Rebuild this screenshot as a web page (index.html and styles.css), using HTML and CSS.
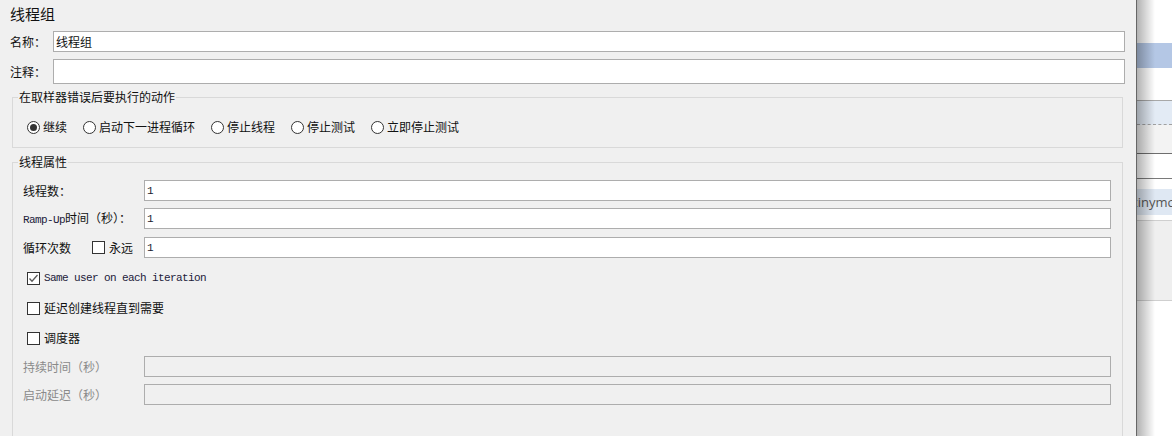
FILE: index.html
```html
<!DOCTYPE html>
<html lang="zh-CN">
<head>
<meta charset="utf-8">
<title>线程组</title>
<link rel="stylesheet" href="styles.css">
</head>
<body>
<div class="app">
  <main class="panel">
    <h1 class="title">线程组</h1>

    <div class="field name-row">
      <label class="field-label" for="name">名称：</label>
      <input id="name" class="text-input" type="text" value="线程组">
    </div>
    <div class="field comment-row">
      <label class="field-label" for="comment">注释：</label>
      <input id="comment" class="text-input tall" type="text" value="">
    </div>

    <fieldset class="group group-error">
      <legend class="group-title">在取样器错误后要执行的动作</legend>
      <div class="radio-row">
        <label class="radio"><span class="radio-mark checked"></span>继续</label>
        <label class="radio"><span class="radio-mark"></span>启动下一进程循环</label>
        <label class="radio"><span class="radio-mark"></span>停止线程</label>
        <label class="radio"><span class="radio-mark"></span>停止测试</label>
        <label class="radio"><span class="radio-mark"></span>立即停止测试</label>
      </div>
    </fieldset>

    <fieldset class="group group-props">
      <legend class="group-title">线程属性</legend>
      <div class="props">
        <div class="prop-row">
          <span class="prop-label">线程数：</span>
          <input class="num-input" type="text" value="1">
        </div>
        <div class="prop-row">
          <span class="prop-label"><span class="mono">Ramp-Up</span>时间（秒）：</span>
          <input class="num-input" type="text" value="1">
        </div>
        <div class="prop-row loop-row">
          <span class="prop-label loop-label">循环次数
            <span class="check inline-check"><span class="check-box"></span>永远</span>
          </span>
          <input class="num-input" type="text" value="1">
        </div>

        <div class="check-row first-check">
          <span class="check"><span class="check-box checked"><svg viewBox="0 0 13 13" width="13" height="13"><path d="M2.5 6.5 L5 9.2 L10.5 3" fill="none" stroke="#5a5a5a" stroke-width="1.3"/></svg></span><span class="mono">Same user on each iteration</span></span>
        </div>
        <div class="check-row">
          <span class="check"><span class="check-box"></span>延迟创建线程直到需要</span>
        </div>
        <div class="check-row">
          <span class="check"><span class="check-box"></span>调度器</span>
        </div>

        <div class="prop-row disabled-row">
          <span class="prop-label muted">持续时间（秒）</span>
          <input class="num-input" type="text" value="" disabled>
        </div>
        <div class="prop-row">
          <span class="prop-label muted">启动延迟（秒）</span>
          <input class="num-input" type="text" value="" disabled>
        </div>
      </div>
    </fieldset>
  </main>

  <aside class="side">
    <div class="side-top"></div>
    <div class="side-selected"></div>
    <div class="side-gap"></div>
    <div class="side-tab"></div>
    <div class="side-toolbar"></div>
    <div class="side-field"></div>
    <div class="side-spacer"></div>
    <div class="side-item"><span class="side-text">tinymce</span></div>
    <div class="side-spacer small"></div>
    <div class="side-gray"></div>
    <div class="side-rest"></div>
  </aside>
</div>
</body>
</html>
```

FILE: styles.css
```css
* {
  box-sizing: border-box;
}

html, body {
  margin: 0;
  padding: 0;
  height: 100%;
  overflow: hidden;
}

body {
  background: #f0f0f0;
  font-family: "Noto Sans CJK SC", "Microsoft YaHei", sans-serif;
  font-size: 12px;
  color: #111;
}

.app {
  display: flex;
  height: 436px;
}

/* ---------- main panel ---------- */
.panel {
  width: 1137px;
  flex: none;
  height: 436px;
  overflow: hidden;
  background: #f0f0f0;
  border-right: 1px solid #666;
  padding: 0 11px 0 10px;
}

.title {
  margin: 0;
  padding-top: 3px;
  font-size: 15px;
  font-weight: normal;
  line-height: 22px;
  color: #111;
}

.field {
  display: flex;
  align-items: center;
}

.name-row {
  margin-top: 6px;
}

.comment-row {
  margin-top: 7px;
}

.field-label {
  width: 43px;
  flex: none;
  line-height: 16px;
}

.text-input,
.num-input {
  flex: 1;
  min-width: 0;
  height: 21px;
  margin: 0;
  padding: 0 2px;
  border: 1px solid #adadad;
  border-radius: 0;
  background: #fff;
  outline: none;
  font-family: "Noto Sans CJK SC", "Microsoft YaHei", sans-serif;
  font-size: 12px;
  color: #111;
}

.text-input.tall {
  height: 25px;
}

.num-input {
  font-family: "Liberation Mono", monospace;
  font-size: 11px;
  color: #1a1a30;
}

.num-input:disabled {
  background: #f0f0f0;
}

/* ---------- groups ---------- */
.group {
  margin: 0 2px;
  padding: 0;
  border: 1px solid #d9d9d9;
  min-width: 0;
}

.group-error {
  margin-top: 6px;
}

.group-props {
  margin-top: 7px;
  padding-bottom: 40px;
}

.group-title {
  margin-left: 5px;
  padding: 0 1px;
  font-size: 12px;
  line-height: 14px;
  color: #111;
}

.radio-row {
  display: flex;
  align-items: center;
  gap: 16px;
  height: 20px;
  box-sizing: content-box;
  padding: 13px 0 10px 14px;
}

.radio {
  display: inline-flex;
  align-items: center;
  gap: 3px;
  line-height: 20px;
  white-space: nowrap;
}

.radio-mark {
  width: 13px;
  height: 13px;
  border: 1px solid #333;
  border-radius: 50%;
  background: #fff;
  display: inline-flex;
  align-items: center;
  justify-content: center;
}

.radio-mark.checked::after {
  content: "";
  width: 7px;
  height: 7px;
  border-radius: 50%;
  background: #333;
}

/* ---------- properties ---------- */
.props {
  display: flex;
  flex-direction: column;
  gap: 7px;
  padding: 11px 11px 0 10px;
}

.prop-row {
  display: flex;
  align-items: center;
}

.prop-label {
  width: 121px;
  flex: none;
  line-height: 16px;
  white-space: nowrap;
}

.loop-row {
  margin-top: 1px;
}

.loop-label {
  display: flex;
  align-items: center;
  gap: 21px;
}

.mono {
  font-family: "Liberation Mono", monospace;
  font-size: 11px;
  letter-spacing: -0.6px;
  color: #22203a;
}

.muted {
  color: #8a8a8a;
}

.check-row {
  height: 22px;
  display: flex;
  align-items: center;
  padding-left: 4px;
  margin-top: 1px;
}

.first-check {
  margin-top: 2px;
}

.disabled-row {
  margin-top: 0;
}

.check {
  display: inline-flex;
  align-items: center;
  gap: 4px;
  line-height: 16px;
  white-space: nowrap;
}

.check-box {
  width: 13px;
  height: 13px;
  border: 1px solid #333;
  background: #fff;
  display: inline-flex;
  align-items: center;
  justify-content: center;
  flex: none;
}

.check-box svg {
  display: block;
  margin: -1px;
}

.inline-check {
  gap: 4px;
}

/* ---------- right side ---------- */
.side {
  flex: 1;
  position: relative;
  overflow: hidden;
  display: flex;
  flex-direction: column;
  background: #fff;
}

.side::after {
  content: "";
  position: absolute;
  top: 0;
  bottom: 0;
  left: 0;
  width: 18px;
  background: linear-gradient(to right, rgba(0, 0, 0, 0.3), rgba(0, 0, 0, 0));
  pointer-events: none;
}

.side-top {
  height: 43px;
  flex: none;
}

.side-selected {
  height: 25px;
  flex: none;
  background: #b4c7e5;
}

.side-gap {
  height: 32px;
  flex: none;
}

.side-tab {
  height: 25px;
  flex: none;
  background: #e3ebf5;
  border-top: 1px solid #a8a8a8;
  border-bottom: 1px dashed #a0a0a0;
}

.side-toolbar {
  height: 28px;
  flex: none;
  background: #f3f3f3;
}

.side-field {
  height: 26px;
  flex: none;
  background: #fff;
  border-top: 1px solid #6e6e6e;
  border-bottom: 1px solid #7a7a7a;
}

.side-spacer {
  height: 10px;
  flex: none;
}

.side-spacer.small {
  height: 5px;
}

.side-item {
  height: 26px;
  flex: none;
  background: #dfe8f3;
  overflow: hidden;
  white-space: nowrap;
  line-height: 26px;
}

.side-text {
  display: inline-block;
  margin-left: -4px;
  font-family: "Open Sans", "Noto Sans", sans-serif;
  font-size: 13px;
  color: #555;
}

.side-gray {
  height: 81px;
  flex: none;
  background: #efefef;
  border-top: 1px solid #cfcfcf;
  border-bottom: 1px solid #cfcfcf;
}

.side-rest {
  flex: 1;
}
```
